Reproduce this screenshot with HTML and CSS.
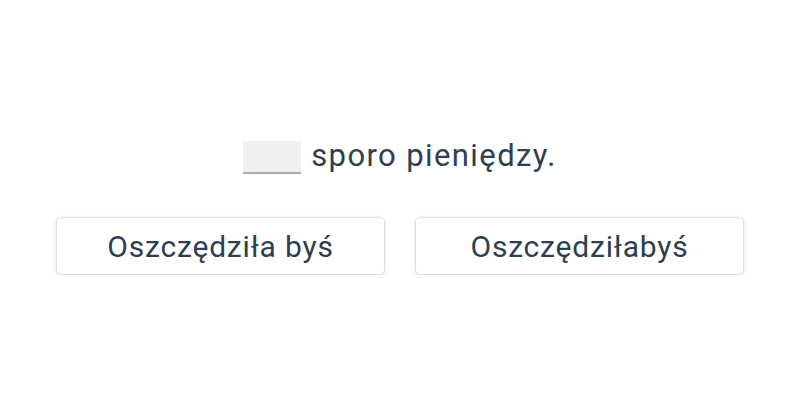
FILE: index.html
```html
<!DOCTYPE html>
<html lang="pl">
<head>
    <meta charset="UTF-8">
    <title>Wybierz poprawną formę</title>
    <link rel="stylesheet" href="styles.css">
</head>
<body>
<div class="quiz">
    <p class="sentence"><span class="gap"></span>sporo pieniędzy.</p>
    <div class="answers">
        <button class="answer">Oszczędziła byś</button>
        <button class="answer">Oszczędziłabyś</button>
    </div>
</div>
</body>
</html>
```

FILE: styles.css
```css
body{margin:0;background:#fff;font-family:Roboto,"Liberation Sans",sans-serif;color:#2f3e50;}
.quiz{width:688px;margin:0 auto;padding-top:135px;}
.sentence{margin:0;text-align:center;font-size:31px;line-height:42px;letter-spacing:1.4px;}
.gap{display:inline-block;width:58px;height:31px;background:#eef0f2;border-bottom:2px solid #a9adb2;vertical-align:-8px;margin-right:10px;}
.answers{display:flex;gap:30px;margin-top:40px;}
.answer{flex:1;height:58px;background:#fff;border:1px solid #dcdfe3;border-radius:5px;box-shadow:0 1px 4px rgba(0,0,0,0.1);font:30px Roboto,"Liberation Sans",sans-serif;letter-spacing:0.8px;color:#2f3e50;padding:0;}
```
